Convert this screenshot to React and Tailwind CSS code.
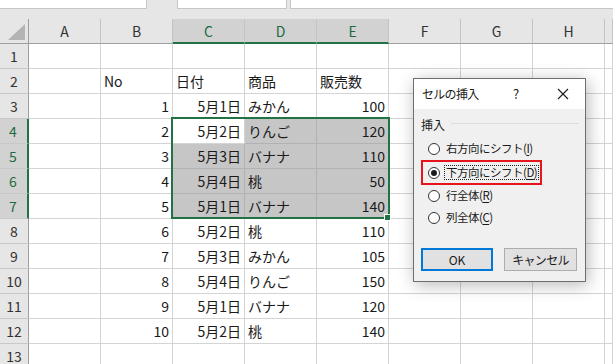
import React from "react";

const FONT = { fontFamily: '"Noto Sans CJK JP", "Noto Sans", sans-serif' };
const COLS = ["A", "B", "C", "D", "E", "F", "G", "H", "I"];
const SELCOLS = ["C", "D", "E"];

const DATA = {
  2: { B: ["No", "l"], C: ["日付", "l"], D: ["商品", "l"], E: ["販売数", "l"] },
};
const ROWS = [
  [1, "5月1日", "みかん", 100],
  [2, "5月2日", "りんご", 120],
  [3, "5月3日", "バナナ", 110],
  [4, "5月4日", "桃", 50],
  [5, "5月1日", "バナナ", 140],
  [6, "5月2日", "桃", 110],
  [7, "5月3日", "みかん", 105],
  [8, "5月4日", "りんご", 150],
  [9, "5月1日", "バナナ", 120],
  [10, "5月2日", "桃", 140],
];
ROWS.forEach((r, i) => {
  DATA[i + 3] = {
    B: [String(r[0]), "r"],
    C: [r[1], "r"],
    D: [r[2], "l"],
    E: [String(r[3]), "r"],
  };
});

function isSel(row, col) {
  return row >= 4 && row <= 7 && SELCOLS.includes(col) && !(row === 4 && col === "C");
}

function Cell({ row, col }) {
  const d = DATA[row] && DATA[row][col];
  const sel = isSel(row, col);
  const w = col === "I" ? "flex-1" : "w-[72px] shrink-0";
  const bg = sel ? "bg-[#c6c6c6] border-[#b2b2b2]" : "bg-white border-[#d4d4d4]";
  const align = d && d[1] === "r" ? "justify-end pr-[3px]" : "justify-start pl-[3px]";
  return (
    <div className={`${w} h-full border-r border-b ${bg} flex items-center ${align} text-[14px] text-[#1a1a1a] leading-none whitespace-nowrap overflow-hidden`}>
      {d ? d[0] : ""}
    </div>
  );
}

function Row({ row }) {
  const sel = row >= 4 && row <= 7;
  return (
    <div className="flex h-[25px]">
      <div
        className={`w-[29px] shrink-0 h-full border-b border-b-[#c8c8c8] flex items-center justify-center text-[14px] leading-none ${
          sel
            ? "bg-[#d2d2d2] border-r-2 border-r-[#217346] text-[#1e6b40] pr-[1px]"
            : "bg-[#e6e6e6] border-r border-r-[#9e9e9e] text-[#333]"
        }`}
      >
        {row}
      </div>
      {COLS.map((c) => (
        <Cell key={c} row={row} col={c} />
      ))}
    </div>
  );
}

function Radio({ checked }) {
  return (
    <span className="w-[12px] h-[12px] shrink-0 rounded-full border border-[#333] bg-white flex items-center justify-center">
      {checked && <span className="w-[6px] h-[6px] rounded-full bg-[#1a1a1a]" />}
    </span>
  );
}

function Option({ label, k, checked, focus }) {
  return (
    <div
      className={`ml-[7px] w-[121px] flex items-center ${
        focus ? "h-[25px] border-2 border-[#e8141b] pl-[5px]" : "h-[22px] pl-[7px]"
      }`}
    >
      <Radio checked={checked} />
      <span
        className={`ml-[4px] px-[1px] h-[15px] flex items-center border whitespace-nowrap text-[11.5px] tracking-[-0.5px] ${
          focus ? "border-dotted border-[#222]" : "border-transparent"
        }`}
      >
        {label}(<span className="underline underline-offset-2">{k}</span>)
      </span>
    </div>
  );
}

function Dialog() {
  return (
    <div
      className="absolute left-[413px] top-[78px] w-[173px] h-[204px] border border-[#6e6e6e] bg-[#f0f0f0] shadow-[2px_3px_16px_rgba(0,0,0,0.28)] flex flex-col text-[12px] text-[#1a1a1a] leading-none"
    >
      <div className="h-[30px] bg-white flex items-center shrink-0 relative">
        <span className="ml-[8px] tracking-[-0.7px]">セルの挿入</span>
        <span className="absolute left-[99px] top-[8px] text-[13px]">?</span>
        <svg className="absolute left-[143px] top-[9px]" width="12" height="12" viewBox="0 0 12 12">
          <path d="M1 1 L11 11 M11 1 L1 11" stroke="#1a1a1a" strokeWidth="1.1" fill="none" />
        </svg>
      </div>
      <div className="flex flex-col pt-[6px]">
        <div className="h-[20px] flex items-center pl-[7px]">
          <span>挿入</span>
          <span className="ml-[6px] flex-1 mr-[6px] h-px bg-[#dcdcdc] mt-[-3px]" />
        </div>
        <div className="mt-[3px]">
          <Option label="右方向にシフト" k="I" />
          <Option label="下方向にシフト" k="D" checked focus />
          <Option label="行全体" k="R" />
          <Option label="列全体" k="C" />
        </div>
        <div className="mt-[19px] flex pl-[7px]">
          <div className="w-[72px] h-[23px] border-2 border-[#0078d7] bg-[#e1e1e1] flex items-center justify-center">
            OK
          </div>
          <div className="ml-[11px] w-[73px] h-[23px] border border-[#adadad] bg-[#e1e1e1] flex items-center justify-center tracking-[-0.7px]">
            キャンセル
          </div>
        </div>
      </div>
    </div>
  );
}

export default function App() {
  return (
    <div className="relative w-[613px] h-[364px] overflow-hidden bg-white" style={FONT}>
      {/* top strip */}
      <div className="h-[19px] bg-[#e6e6e6] flex items-start">
        <div className="w-[147px] h-[9px] bg-white border-r border-b border-[#c6c6c6]" />
        <div className="ml-[30px] w-[110px] h-[9px] bg-white border-x border-b border-[#c6c6c6]" />
        <div className="ml-[3px] flex-1 h-[9px] bg-white border-l border-b border-[#c6c6c6]" />
      </div>
      {/* column header */}
      <div className="flex h-[25px]">
        <div className="w-[29px] shrink-0 h-full bg-[#e6e6e6] border-r border-b border-[#9e9e9e] relative">
          <svg className="absolute left-[8px] top-[5px]" width="17" height="16" viewBox="0 0 17 16">
            <polygon points="17,0 17,16 0,16" fill="#b4b4b4" />
          </svg>
        </div>
        {COLS.map((c) => {
          const sel = SELCOLS.includes(c);
          return (
            <div
              key={c}
              className={`${c === "I" ? "flex-1" : "w-[72px] shrink-0"} h-full border-r border-r-[#c4c4c4] flex items-center justify-center text-[14px] leading-none ${
                sel
                  ? "bg-[#d2d2d2] border-b-2 border-b-[#217346] text-[#1e6b40] pt-[1px]"
                  : "bg-[#e6e6e6] border-b border-b-[#9e9e9e] text-[#333]"
              }`}
            >
              {c === "I" ? "" : c}
            </div>
          );
        })}
      </div>
      {Array.from({ length: 13 }, (_, i) => (
        <Row key={i} row={i + 1} />
      ))}
      {/* selection overlay */}
      <div className="absolute left-[171px] top-[117px] w-[219px] h-[102px] border-2 border-[#217346] pointer-events-none" />
      <div className="absolute left-[384px] top-[214px] w-[7px] h-[7px] bg-[#217346] border border-white" />
      <Dialog />
    </div>
  );
}
